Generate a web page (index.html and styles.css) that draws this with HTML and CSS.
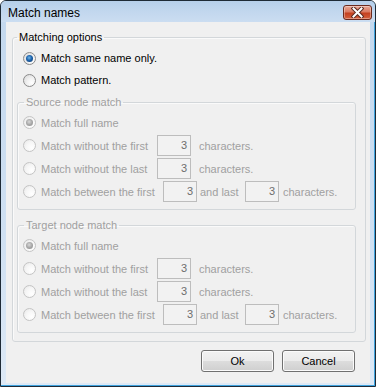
FILE: index.html
```html
<!DOCTYPE html>
<html lang="en">
<head>
    <meta charset="UTF-8">
    <meta name="viewport" content="width=device-width, initial-scale=1.0">
    <title>Match names</title>
    <link rel="stylesheet" href="styles.css">
</head>
<body>

<div class="window">
    <div class="titlebar">
        <span class="title">Match names</span>
        <button type="button" class="close" aria-label="Close">
            <svg width="13" height="11" viewBox="0 0 13 11">
                <path d="M2.5 1.5 L10.5 9.5 M10.5 1.5 L2.5 9.5" stroke="#5a2a20" stroke-width="4" stroke-linecap="square"/>
                <path d="M2.5 1.5 L10.5 9.5 M10.5 1.5 L2.5 9.5" stroke="#ffffff" stroke-width="2" stroke-linecap="square"/>
            </svg>
        </button>
    </div>
    <div class="frame">
        <div class="client">
            <fieldset class="group outer">
                <legend>Matching options</legend>
                <label class="opt"><span class="radio checked"></span>Match same name only.</label>
                <label class="opt"><span class="radio"></span>Match pattern.</label>

                <fieldset class="group sub disabled">
                    <legend>Source node match</legend>
                    <div class="row"><span class="radio checked"></span><span class="txt">Match full name</span></div>
                    <div class="row"><span class="radio"></span><span class="txt w-first">Match without the first</span><span class="num">3</span><span class="chars">characters.</span></div>
                    <div class="row"><span class="radio"></span><span class="txt w-first">Match without the last</span><span class="num">3</span><span class="chars">characters.</span></div>
                    <div class="row"><span class="radio"></span><span class="txt w-between">Match between the first</span><span class="num">3</span><span class="and">and last</span><span class="num">3</span><span class="chars tight">characters.</span></div>
                </fieldset>

                <fieldset class="group sub disabled">
                    <legend>Target node match</legend>
                    <div class="row"><span class="radio checked"></span><span class="txt">Match full name</span></div>
                    <div class="row"><span class="radio"></span><span class="txt w-first">Match without the first</span><span class="num">3</span><span class="chars">characters.</span></div>
                    <div class="row"><span class="radio"></span><span class="txt w-first">Match without the last</span><span class="num">3</span><span class="chars">characters.</span></div>
                    <div class="row"><span class="radio"></span><span class="txt w-between">Match between the first</span><span class="num">3</span><span class="and">and last</span><span class="num">3</span><span class="chars tight">characters.</span></div>
                </fieldset>
            </fieldset>

            <div class="buttons">
                <button type="button" class="btn">Ok</button>
                <button type="button" class="btn">Cancel</button>
            </div>
        </div>
    </div>
</div>

</body>
</html>
```

FILE: styles.css
```css
html, body {
    margin: 0;
    padding: 0;
    background: #ffffff;
}

body {
    font-family: "Liberation Sans", Arial, sans-serif;
    font-size: 11px;
    color: #000;
}

.window {
    width: 376px;
    height: 387px;
    box-sizing: border-box;
    border: 1px solid #1e2a36;
    border-radius: 6px 6px 0 0;
    background: linear-gradient(180deg, #c3d8ee 0%, #cfe0f2 60%, #dde9f6 100%);
    box-shadow: inset -1px -1px 0 #3fa3de;
    display: flex;
    flex-direction: column;
    overflow: hidden;
}

/* title bar */
.titlebar {
    height: 21px;
    flex: none;
    display: flex;
    justify-content: space-between;
    align-items: flex-start;
    padding: 0 3px 0 7px;
    background: linear-gradient(180deg, #b6cfea 0%, #c2d7ee 50%, #cbddf1 100%);
}

.title {
    font-size: 12px;
    line-height: 14px;
    margin-top: 5px;
}

.close {
    width: 29px;
    height: 15px;
    margin-top: 4px;
    padding: 0;
    border: 1px solid #6b2a1e;
    border-radius: 3px;
    background: linear-gradient(180deg, #e9a896 0%, #d97a62 45%, #c4401f 55%, #d4603e 100%);
    box-shadow: inset 0 0 0 1px rgba(255, 255, 255, 0.35);
    display: flex;
    align-items: center;
    justify-content: center;
}

/* window body */
.frame {
    flex: 1;
    padding: 0 5px 3px 5px;
    display: flex;
}

.client {
    flex: 1;
    background: #f0f0f0;
    padding: 8px 4px 0 6px;
}

/* group boxes */
.group {
    margin: 0;
    border: 1px solid #d3d7da;
    border-radius: 3px;
    box-shadow: inset 1px 1px 0 #fafafa;
    min-width: 0;
}

.group legend {
    padding: 0 2px;
    line-height: 14px;
}

.outer {
    padding: 3px 9px 8px 4px;
}

.sub {
    padding: 2px 0 6px 5px;
    margin-top: 4px;
}

.sub + .sub {
    margin-top: 8px;
}

.sub legend {
    margin-left: 1px;
}

.disabled,
.disabled legend {
    color: #a0a0a0;
}

.opt {
    display: flex;
    align-items: center;
    height: 22px;
    padding-left: 6px;
}

.row {
    display: flex;
    align-items: center;
    height: 23px;
    white-space: nowrap;
}

.txt.w-first {
    width: 116px;
}

.txt.w-between {
    width: 122px;
}

.num {
    width: 34px;
    height: 21px;
    box-sizing: border-box;
    border: 1px solid #bdbdbd;
    background: #f2f2f2;
    color: #6d6d6d;
    text-align: right;
    padding-right: 3px;
    line-height: 19px;
}

.chars {
    margin-left: 8px;
}

.chars.tight {
    margin-left: 4px;
}

.and {
    margin-left: 3px;
    width: 45px;
}

/* radio buttons */
.radio {
    width: 13px;
    height: 13px;
    flex: none;
    box-sizing: border-box;
    border: 1px solid #8b8b8b;
    border-radius: 50%;
    background: radial-gradient(circle at 70% 70%, #ffffff 0%, #f2f2f2 40%, #d6d6d6 100%);
    margin-right: 5px;
    position: relative;
}

.radio.checked::after {
    content: '';
    position: absolute;
    left: 2px;
    top: 2px;
    width: 7px;
    height: 7px;
    border-radius: 50%;
    background: radial-gradient(circle at 45% 40%, #6fb6e8 0%, #1f64ad 45%, #0d3563 100%);
}

.disabled .radio {
    border-color: #c4c4c4;
    background: radial-gradient(circle at 70% 70%, #ffffff 0%, #f6f6f6 50%, #e6e6e6 100%);
}

.disabled .radio.checked::after {
    background: radial-gradient(circle at 45% 40%, #d8d8d8 0%, #a8a8a8 50%, #8a8a8a 100%);
}

/* dialog buttons */
.buttons {
    display: flex;
    justify-content: flex-end;
    gap: 8px;
    margin-top: 8px;
    padding-right: 11px;
}

.btn {
    width: 73px;
    height: 22px;
    padding: 0;
    border: 1px solid #707070;
    border-radius: 3px;
    background: linear-gradient(180deg, #f2f2f2 0%, #ebebeb 50%, #dddddd 50%, #cfcfcf 100%);
    box-shadow: inset 0 0 0 1px #fbfbfb;
    font-family: "Liberation Sans", Arial, sans-serif;
    font-size: 11px;
    color: #000;
}
```
